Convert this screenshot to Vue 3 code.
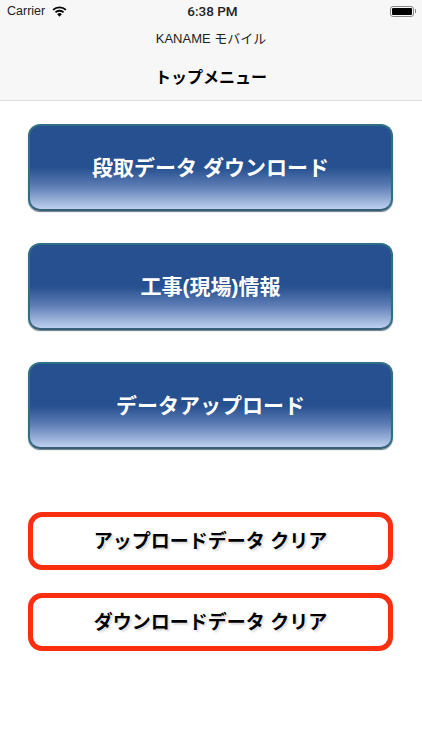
<template>
  <div class="screen">
    <!-- ステータスバー + ナビゲーション -->
    <header class="top-bar">
      <div class="status-bar">
        <div class="status-left">
          <span>Carrier</span>
          <svg class="wifi" viewBox="0 0 16 12" width="15" height="11">
            <path d="M8 11.6 5.5 8.9a3.6 3.6 0 0 1 5 0z" fill="#000" />
            <path d="M4.3 7.7 2.9 6.2a7.4 7.4 0 0 1 10.2 0l-1.4 1.5a5.4 5.4 0 0 0-7.4 0z" fill="#000" />
            <path d="M1.7 5 .3 3.5a11.2 11.2 0 0 1 15.4 0L14.3 5a9.2 9.2 0 0 0-12.6 0z" fill="#000" />
          </svg>
        </div>
        <div class="status-time">6:38 PM</div>
        <div class="status-right">
          <div class="battery"><div class="battery-fill"></div></div>
          <div class="battery-cap"></div>
        </div>
      </div>
      <div class="app-name">KANAME モバイル</div>
      <div class="page-title">トップメニュー</div>
    </header>

    <main class="menu">
      <div class="main-buttons">
        <button v-for="item in mainItems" :key="item" class="blue-btn">{{ item }}</button>
      </div>
      <div class="clear-buttons">
        <button v-for="item in clearItems" :key="item" class="red-btn">{{ item }}</button>
      </div>
    </main>
  </div>
</template>

<script setup>
const mainItems = ['段取データ ダウンロード', '工事(現場)情報', 'データアップロード']
const clearItems = ['アップロードデータ クリア', 'ダウンロードデータ クリア']
</script>

<style>
html, body {
  margin: 0;
  background: #fff;
}
</style>

<style scoped>
.screen {
  width: 422px;
  height: 750px;
  overflow: hidden;
  background: #fff;
  font-family: "Liberation Sans", "Noto Sans CJK JP", sans-serif;
  color: #000;
}

.top-bar {
  height: 101px;
  box-sizing: border-box;
  background: #f7f7f7;
  border-bottom: 1px solid #dcdcdc;
}

.status-bar {
  height: 22px;
  padding: 0 6px 0 7px;
  display: flex;
  align-items: center;
  justify-content: space-between;
  font-size: 12.5px;
  color: #222;
}

.status-left {
  width: 120px;
  display: flex;
  align-items: center;
  gap: 7px;
}

.status-time {
  font-family: Roboto, sans-serif;
  font-weight: 500;
  font-size: 13.5px;
  margin-left: 2px;
}

.status-right {
  width: 120px;
  display: flex;
  justify-content: flex-end;
  align-items: center;
}

.battery {
  width: 24px;
  height: 11px;
  box-sizing: border-box;
  padding: 1px;
  border: 1px solid #888;
  border-radius: 3px;
}

.battery-fill {
  height: 100%;
  background: #000;
  border-radius: 1px;
}

.battery-cap {
  width: 1px;
  height: 4px;
  margin-left: 1px;
  background: #888;
}

.app-name {
  margin-top: 8px;
  text-align: center;
  font-size: 13px;
  line-height: 18px;
  color: #222;
}

.page-title {
  margin-top: 19px;
  text-align: center;
  font-size: 16px;
  font-weight: bold;
  line-height: 22px;
}

.menu {
  padding: 23px 29px 0 28px;
}

.main-buttons {
  display: flex;
  flex-direction: column;
  gap: 32px;
}

.clear-buttons {
  margin-top: 63px;
  display: flex;
  flex-direction: column;
  gap: 23px;
}

button {
  display: block;
  width: 100%;
  font-family: inherit;
  font-weight: bold;
  cursor: pointer;
}

.blue-btn {
  height: 87px;
  padding: 0 0 4px;
  border: 2px solid #2f6f86;
  border-bottom-color: #36607a;
  border-radius: 12px;
  background: linear-gradient(#26508f 0%, #26508f 50%, #5b7bb4 72%, #bdd0ee 100%);
  box-shadow: 0 1px 1px #6b7a80;
  color: #fff;
  font-size: 21px;
}

.red-btn {
  height: 58px;
  padding: 0 0 3px;
  border: 5px solid #fb2f0f;
  border-radius: 14px;
  background: #fff;
  color: #000;
  font-size: 19px;
  text-shadow: 2px 2px 2px #ddd;
}
</style>
